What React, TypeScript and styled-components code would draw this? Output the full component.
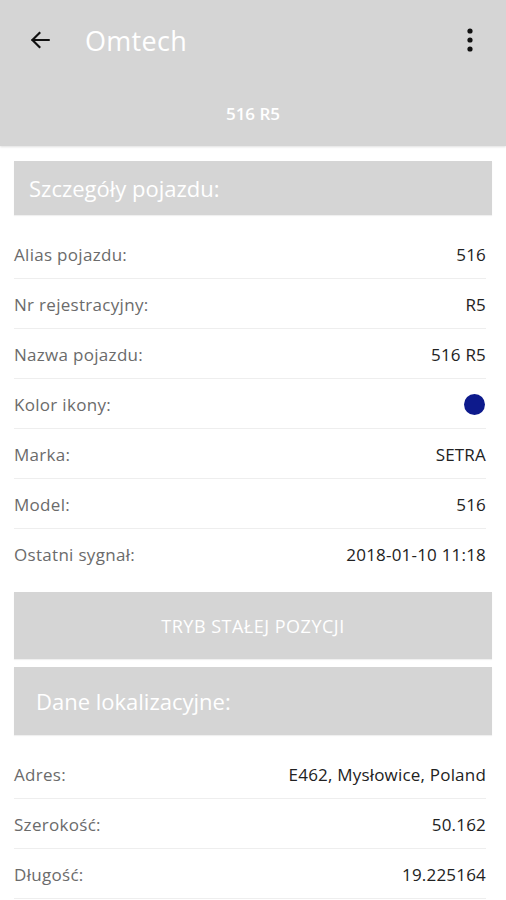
import React from 'react';
import styled, { createGlobalStyle } from 'styled-components';

interface Row {
  label: string;
  value?: string;
  color?: string;
}

const vehicleRows: Row[] = [
  { label: 'Alias pojazdu:', value: '516' },
  { label: 'Nr rejestracyjny:', value: 'R5' },
  { label: 'Nazwa pojazdu:', value: '516 R5' },
  { label: 'Kolor ikony:', color: '#0d1a8c' },
  { label: 'Marka:', value: 'SETRA' },
  { label: 'Model:', value: '516' },
  { label: 'Ostatni sygnał:', value: '2018-01-10 11:18' },
];

const locationRows: Row[] = [
  { label: 'Adres:', value: 'E462, Mysłowice, Poland' },
  { label: 'Szerokość:', value: '50.162' },
  { label: 'Długość:', value: '19.225164' },
];

const GlobalStyle = createGlobalStyle`
  body {
    margin: 0;
    background: #ffffff;
    font-family: "Open Sans", "Noto Sans", sans-serif;
  }
`;

const Page = styled.div`
  width: 506px;
  height: 900px;
  overflow: hidden;
  background: #ffffff;
`;

const AppBar = styled.header`
  height: 146px;
  background: #d5d5d5;
  box-shadow: 0 1px 2px rgba(0, 0, 0, 0.12);
  display: flex;
  flex-direction: column;
`;

const Toolbar = styled.div`
  height: 80px;
  display: flex;
  align-items: center;
  padding: 0 22px 0 26px;
`;

const IconButton = styled.div`
  width: 28px;
  height: 28px;
  display: flex;
  align-items: center;
  justify-content: center;
`;

const Title = styled.h1`
  flex: 1;
  margin: 0 0 0 31px;
  font-size: 27px;
  font-weight: 400;
  color: #ffffff;
  letter-spacing: 0.3px;
`;

const Subtitle = styled.div`
  flex: 1;
  display: flex;
  align-items: center;
  justify-content: center;
  font-size: 17px;
  font-weight: 600;
  color: #ffffff;
`;

const Content = styled.main`
  padding: 15px 14px 0;
  display: flex;
  flex-direction: column;
`;

const SectionHeader = styled.div<{ $height: number; $indent: number }>`
  height: ${({ $height }) => $height}px;
  background: #d5d5d5;
  display: flex;
  align-items: center;
  padding-left: ${({ $indent }) => $indent}px;
  font-size: 22px;
  color: #ffffff;
  box-shadow: 0 1px 1px rgba(0, 0, 0, 0.06);
`;

const List = styled.div`
  margin: 14px 6px 0 0;
  display: flex;
  flex-direction: column;
`;

const RowItem = styled.div<{ $divider: boolean }>`
  height: 50px;
  box-sizing: border-box;
  display: flex;
  align-items: center;
  justify-content: space-between;
  border-bottom: 1px solid ${({ $divider }) => ($divider ? '#eeeeee' : 'transparent')};
  padding-top: 2px;
`;

const Label = styled.span`
  font-size: 17px;
  letter-spacing: 0.3px;
  color: #6b6b6b;
`;

const Value = styled.span`
  font-size: 17px;
  letter-spacing: 0.2px;
  color: #222222;
`;

const Dot = styled.span<{ $color: string }>`
  width: 21px;
  height: 21px;
  border-radius: 50%;
  background: ${({ $color }) => $color};
  margin-right: 1px;
`;

const ActionButton = styled.button`
  margin-top: 13px;
  height: 67px;
  border: none;
  background: #d5d5d5;
  color: #ffffff;
  font-family: inherit;
  font-size: 18px;
  letter-spacing: 0.5px;
  box-shadow: 0 1px 1px rgba(0, 0, 0, 0.06);
  margin-bottom: 8px;
`;

const Rows: React.FC<{ rows: Row[]; lastDivider: boolean }> = ({ rows, lastDivider }) => (
  <List>
    {rows.map((row, i) => (
      <RowItem key={row.label} $divider={i < rows.length - 1 || lastDivider}>
        <Label>{row.label}</Label>
        {row.color ? <Dot $color={row.color} /> : <Value>{row.value}</Value>}
      </RowItem>
    ))}
  </List>
);

const App: React.FC = () => (
  <Page>
    <GlobalStyle />
    <AppBar>
      <Toolbar>
        <IconButton>
          <svg width="26" height="26" viewBox="0 0 24 24" fill="none" stroke="#111" strokeWidth="2" strokeLinecap="square">
            <path d="M20 12H5M11.5 5.5L5 12l6.5 6.5" />
          </svg>
        </IconButton>
        <Title>Omtech</Title>
        <IconButton>
          <svg width="8" height="26" viewBox="0 0 8 26" fill="#111">
            <circle cx="4" cy="4" r="2.6" />
            <circle cx="4" cy="13" r="2.6" />
            <circle cx="4" cy="22" r="2.6" />
          </svg>
        </IconButton>
      </Toolbar>
      <Subtitle>516 R5</Subtitle>
    </AppBar>
    <Content>
      <SectionHeader $height={54} $indent={15}>Szczegóły pojazdu:</SectionHeader>
      <Rows rows={vehicleRows} lastDivider={false} />
      <ActionButton>TRYB STAŁEJ POZYCJI</ActionButton>
      <SectionHeader $height={68} $indent={22}>Dane lokalizacyjne:</SectionHeader>
      <Rows rows={locationRows} lastDivider />
    </Content>
  </Page>
);

export default App;
